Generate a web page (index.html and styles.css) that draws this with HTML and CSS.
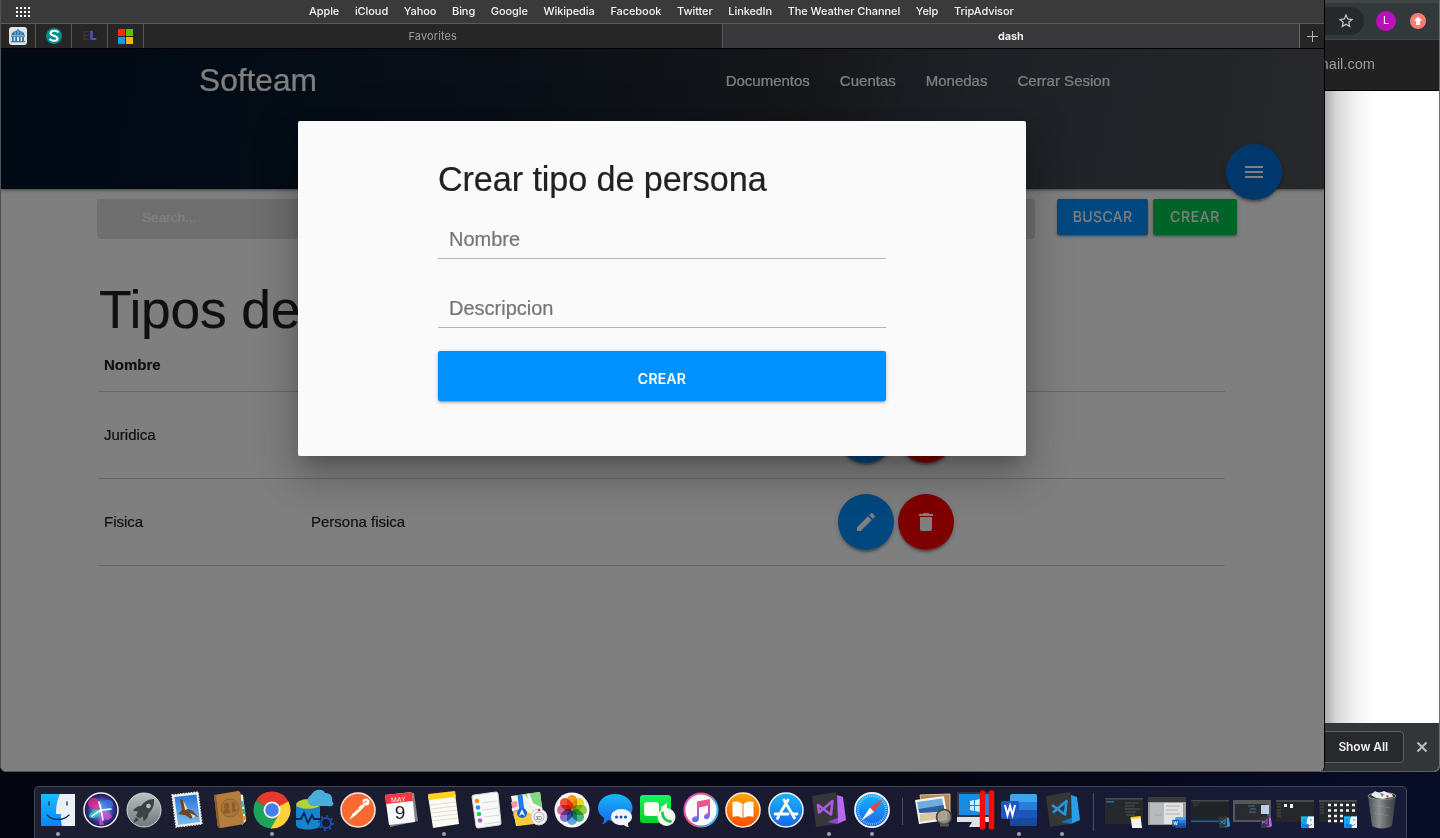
FILE: index.html
```html
<!DOCTYPE html>
<html lang="es">
<head>
<meta charset="utf-8">
<title>dash</title>
<link rel="stylesheet" href="styles.css">
</head>
<body>
<svg width="0" height="0" class="defs">
  <defs>
    <linearGradient id="g-finder" x1="0" y1="0" x2="0" y2="1"><stop offset="0" stop-color="#19bdfd"/><stop offset="1" stop-color="#0a83fa"/></linearGradient>
    <linearGradient id="g-grey" x1="0" y1="0" x2="0" y2="1"><stop offset="0" stop-color="#b9c1c4"/><stop offset="1" stop-color="#6f7779"/></linearGradient>
    <linearGradient id="g-sky" x1="0" y1="0" x2="0" y2="1"><stop offset="0" stop-color="#2474d8"/><stop offset="1" stop-color="#7fc0f0"/></linearGradient>
    <linearGradient id="g-orange" x1="0" y1="0" x2="0" y2="1"><stop offset="0" stop-color="#ffa800"/><stop offset="1" stop-color="#fb4b05"/></linearGradient>
    <linearGradient id="g-blue" x1="0" y1="0" x2="0" y2="1"><stop offset="0" stop-color="#17b7fb"/><stop offset="1" stop-color="#1a66e8"/></linearGradient>
    <linearGradient id="g-green" x1="0" y1="0" x2="0" y2="1"><stop offset="0" stop-color="#19f45b"/><stop offset="1" stop-color="#04d12b"/></linearGradient>
    <linearGradient id="g-note" x1="0" y1="0" x2="0" y2="1"><stop offset="0" stop-color="#ff5374"/><stop offset=".6" stop-color="#b75bd8"/><stop offset="1" stop-color="#3478f6"/></linearGradient>
    <linearGradient id="g-ring" x1="0" y1="0" x2="1" y2=".4"><stop offset="0" stop-color="#d14cf4"/><stop offset=".5" stop-color="#ff4d63"/><stop offset="1" stop-color="#37b6ff"/></linearGradient>
    <linearGradient id="g-trash" x1="0" y1="0" x2="1" y2="0"><stop offset="0" stop-color="#4b4e50"/><stop offset=".4" stop-color="#8b8e90"/><stop offset=".7" stop-color="#5c5f61"/><stop offset="1" stop-color="#38393b"/></linearGradient>
    <radialGradient id="g-siri"><stop offset="0" stop-color="#e8ffff"/><stop offset=".3" stop-color="#58b8dc"/><stop offset=".7" stop-color="#3a3a96"/><stop offset="1" stop-color="#1b1238"/></radialGradient>
    <symbol id="finder" viewBox="0 0 34 34"><path fill="url(#g-finder)" d="M0 1h34v32H0z"/><path fill="#eceff6" d="M19 1h15v32H21c-1-4-1.200-8-1-12h-5c0-8 1-14 4-20z"/><path fill="none" stroke="#16314f" stroke-width="1.300" stroke-linecap="round" d="M8 9v3M26 9v3M6 22c6 6 16 6 22 0"/></symbol>
    <symbol id="vs" viewBox="0 0 34 36"><path fill="#373639" d="M0 4 24 0l6 31-26 4z"/><path fill="#8f45c4" d="m25 26 9 2-9 4-10-2z"/><path fill="#b768ee" d="m25 3 6 2 3 23-8 3z"/><path fill="none" stroke="#a95be0" stroke-width="2.600" stroke-linejoin="round" d="m6 13 13 9.500L20.500 9 7 20.500z"/></symbol>
    <symbol id="code" viewBox="0 0 34 36"><path fill="#353638" d="M0 4 24 0l6 31-26 4z"/><path fill="#1273b9" d="m25 26 9 2-9 4-10-2z"/><path fill="#2b9fe6" d="m25 3 6 2 3 23-8 3z"/><path fill="none" stroke="#2496e0" stroke-width="2.600" stroke-linejoin="round" d="m6 13 13 9.500L20.500 9 7 20.500"/></symbol>
    <symbol id="word" viewBox="0 0 36 32"><rect x="9" width="27" height="32" rx="2" fill="#1d55b9"/><path fill="#3fa3ee" d="M11 0h23a2 2 0 0 1 2 2v6H9V2a2 2 0 0 1 2-2z"/><path fill="#2b7cd6" d="M9 8h27v8H9z"/><path fill="#174a9f" d="M9 24h27v6a2 2 0 0 1-2 2H11a2 2 0 0 1-2-2z"/><rect y="7" width="18" height="18" rx="2" fill="#1c57bd"/><path fill="none" stroke="#fff" stroke-width="2" d="m4 11 2.500 10L9 12l2.500 9L14 11"/></symbol>
    <symbol id="notes" viewBox="0 0 34 38"><path fill="#fbfaf3" d="m1 5 27-3 4 31-26 4z"/><path fill="#ffd21c" d="m1 3 27-3 1 6-27 3z"/><path fill="none" stroke="#d5d2c4" stroke-width=".7" d="m3 14 26-3M3.500 18l26-3M4 22l26-3M4.500 26l26-3M5 30l26-3"/></symbol>
  </defs>
</svg>

<section class="chrome">
  <div class="chrome-toolbar">
    <div class="omnibox"><svg width="18" height="18" viewBox="0 0 24 24"><path fill="#c5c8ca" d="m22 9.240-7.190-.62L12 2 9.190 8.630 2 9.240l5.460 4.730L5.820 21 12 17.270 18.180 21l-1.630-7.030zM12 15.400l-3.760 2.270 1-4.280-3.320-2.880 4.380-.38L12 6.100l1.710 4.040 4.380.38-3.320 2.880 1 4.280z"/></svg></div>
    <span class="avatar">L</span>
    <span class="update"><svg width="16" height="16" viewBox="0 0 16 16"><path fill="#fff" d="m8 3.500 4.200 4.300H10V12H6V7.800H3.800z"/></svg></span>
  </div>
  <div class="infobar">mail.com</div>
  <div class="chrome-page"></div>
  <div class="downloads"><span class="show-all">Show All</span><svg width="12" height="12" viewBox="0 0 12 12"><path stroke="#bcbfc1" stroke-width="2" d="m1.500 1.500 9 9m0-9-9 9"/></svg></div>
</section>

<section class="safari">
  <div class="bookmarks">
    <svg class="grid-icon" width="14" height="11" viewBox="0 0 14 11"><path stroke="#fff" stroke-width="2" stroke-dasharray="2 2" d="M0 1h14M0 5h14M0 9h14"/></svg>
    <nav class="bookmark-list"><span>Apple</span><span>iCloud</span><span>Yahoo</span><span>Bing</span><span>Google</span><span>Wikipedia</span><span>Facebook</span><span>Twitter</span><span>LinkedIn</span><span>The Weather Channel</span><span>Yelp</span><span>TripAdvisor</span></nav>
  </div>
  <div class="tabs">
    <span class="pin"><svg width="18" height="18" viewBox="0 0 18 18"><rect width="18" height="18" rx="3" fill="#e2e3e4"/><path fill="#2878ad" d="M2.500 8C3 5 5 4 8 3.500V2.500h2v1c3 .5 5 1.500 5.500 4.500zM2 8.500h14v1.300H2zM3 10h1.700v4H3zm3.200 0H8v4H6.200zM10 10h1.700v4H10zm3.200 0H15v4h-1.800zM2 14h14v1.200H2z"/><path stroke="#e2e3e4" stroke-width=".6" d="M6 4v4M9 3.500V8M12 4v4"/></svg></span>
    <span class="pin"><svg width="16" height="16" viewBox="0 0 16 16"><circle cx="8" cy="8" r="8" fill="#078d91"/><path fill="none" stroke="#fff" stroke-width="2" d="M12.500 4.500C10 2 4.500 2.500 4.500 5.200c0 3 7 2 7 5.300 0 3-5.500 3-8 .5"/></svg></span>
    <span class="pin pin-el"><i>E</i><b>L</b></span>
    <span class="pin"><svg width="15" height="15" viewBox="0 0 15 15"><path fill="#fe2b04" d="M0 0h7v7H0z"/><path fill="#66bc00" d="M8 0h7v7H8z"/><path fill="#059ff1" d="M0 8h7v7H0z"/><path fill="#ffb900" d="M8 8h7v7H8z"/></svg></span>
    <span class="tab">Favorites</span>
    <span class="tab active">dash</span>
    <span class="new-tab"><svg width="11" height="11" viewBox="0 0 11 11"><path stroke="#b5b5b5" d="M5.500 0v11M0 5.500h11"/></svg></span>
  </div>
  <main class="page">
    <header class="hero">
      <div class="nav">
        <a class="brand">Softeam</a>
        <ul class="links"><li>Documentos</li><li>Cuentas</li><li>Monedas</li><li>Cerrar Sesion</li></ul>
      </div>
      <span class="fab menu"><svg width="24" height="24" viewBox="0 0 24 24"><path fill="#fff" d="M3 18h18v-2H3zm0-5h18v-2H3zm0-7v2h18V6z"/></svg></span>
    </header>
    <div class="search-row">
      <div class="search">Search...</div>
      <span class="btn blue">BUSCAR</span>
      <span class="btn green">CREAR</span>
    </div>
    <h2>Tipos de</h2>
    <table class="people">
      <thead><tr><th class="c1">Nombre</th><th class="c2"></th><th></th></tr></thead>
      <tbody>
        <tr><td>Juridica</td><td></td><td><div class="actions"><span class="fab blue"></span><span class="fab red"></span></div></td></tr>
        <tr><td>Fisica</td><td>Persona fisica</td><td><div class="actions">
          <span class="fab blue"><svg width="24" height="24" viewBox="0 0 24 24"><path fill="#fff" d="M3 17.250V21h3.750L17.810 9.940l-3.750-3.750zM20.710 7.040a1 1 0 0 0 0-1.410l-2.340-2.340a1 1 0 0 0-1.410 0l-1.830 1.830 3.750 3.750z"/></svg></span>
          <span class="fab red"><svg width="24" height="24" viewBox="0 0 24 24"><path fill="#fff" d="M6 19c0 1.100.9 2 2 2h8c1.100 0 2-.9 2-2V7H6zM19 4h-3.500l-1-1h-5l-1 1H5v2h14z"/></svg></span>
        </div></td></tr>
      </tbody>
    </table>
    <div class="overlay"></div>
    <form class="modal">
      <h4>Crear tipo de persona</h4>
      <div class="field">Nombre</div>
      <div class="field">Descripcion</div>
      <div class="submit">CREAR</div>
    </form>
  </main>
</section>

<section class="dock">
  <span class="app on"><svg width="34" height="34"><use href="#finder"/></svg></span>
  <span class="app"><svg width="36" height="36" viewBox="0 0 36 36"><circle cx="18" cy="18" r="17" fill="url(#g-siri)" stroke="#f1eff4" stroke-width="1.500"/><path fill="#e9268c" opacity=".8" d="M18 18C5 18 3 12 7 7c7-4 10 3 11 11z"/><path fill="#2bd9c0" opacity=".8" d="M18 18c-7 1-13 2-12 7 6 4 10-2 12-7z"/><path fill="#3d74f2" opacity=".7" d="M18 18c1-9 6-13 11-9 4 6-3 9-11 9z"/><path fill="#d84bd7" opacity=".8" d="M18 18c7 1 13 5 10 8-5 5-8 0-10-8zM17 19l-1 14h5z"/><path stroke="#fff" stroke-width="1.500" stroke-linecap="round" fill="none" d="m9 24 9-6 10-1M16 10l2 8 2 10"/></svg></span>
  <span class="app"><svg width="36" height="36" viewBox="0 0 36 36"><circle cx="18" cy="18" r="17" fill="url(#g-grey)" stroke="#cfd5d7"/><path fill="#3d4245" d="M28 7c-6 0-10 3-13 7-4 0-6 2-8 5l5 .5-2 4 3 3 4-2 .5 5c3-2 5-5 5-8 4-4 6-8 5.500-14.500zM10 25l-3 6 6-3z"/><circle cx="22.500" cy="14" r="2.300" fill="#b7c1c4"/></svg></span>
  <span class="app"><svg width="34" height="38" viewBox="0 0 34 38"><path fill="#f2f1ee" d="m2 4 26-3 4 32-26 3z" stroke="#f2f1ee" stroke-dasharray="1.500 1.200" stroke-width="1.500"/><path fill="url(#g-sky)" d="m4.500 6 22-2.500L30 31 8 34z"/><path fill="#6b4528" d="m10 8 3 1 5 9 5 2 5 6-5-1-2 3-6-4-7-1 4-4z"/><path fill="#ead8be" d="m13 9 5 9-3 1zM20 22l6 3-3 2z"/></svg></span>
  <span class="app"><svg width="34" height="38" viewBox="0 0 34 38"><path fill="#f4f4ee" d="m26 3 4 1 3 26-4 4z"/><path stroke-width="3" d="m29 10 1 6" stroke="#3ebad6"/><path stroke-width="3" d="m30.500 18 .6 5" stroke="#47b85b"/><path stroke-width="3" d="m31.500 25 .4 4" stroke="#f28d28"/><path fill="#b47d3c" d="m1 4 24-4q2 0 2.500 2L31 33 8 37q-3 0-3.500-3z"/><path fill="#8e5e28" d="m1 4 2-.4L7 37q-2 0-2.500-3z"/><circle cx="17" cy="17" r="9" fill="#a9733a" stroke="#8f6330"/><path fill="#8a5d2b" d="M13 12c4-1 4 5 2 6 2 1 2 2 2 4l-7 1c0-3 1-4 2-5-2-3-1-5 1-6zm6-1c4 0 4 5 2 6 1 1 3 1 3 3l-5 1z"/></svg></span>
  <span class="app on"><svg width="38" height="38" viewBox="0 0 36 36"><path fill="#e33b2e" d="M18 18 3 9a17.500 17.500 0 0 1 31 2z"/><path fill="#fdd13a" d="M18 18 33.500 10A17.500 17.500 0 0 1 17 35.500z"/><path fill="#1ea35a" d="m18 18-1 17.500A17.500 17.500 0 0 1 3 9z"/><path fill="#1ea35a" d="m17 35.500 8-14-8-3-6 3z"/><path fill="#fdd13a" d="m17 35.500 8-13.500 1-8h8l-3 13z"/><path fill="#e33b2e" d="M18 10h15.500l-5-4H8z"/><circle cx="18" cy="18" r="8" fill="#f5f7fa"/><circle cx="18" cy="18" r="6.400" fill="#4380ec"/></svg></span>
  <span class="app"><svg width="38" height="42" viewBox="0 0 38 42"><ellipse cx="12" cy="16" rx="12" ry="6" fill="#b2d235"/><path fill="#1583cd" d="M0 16c2 5 22 5 24 0v20c0 6-24 6-24 0z"/><path fill="none" stroke="#0b2454" stroke-width="1.800" d="M0 30h5l3-6 4 10 4-8 2 4h6"/><path fill="#47aeda" d="M16 17a6 6 0 0 1-1-11C18 0 27-1 29 4c5 0 8 3 7 8 4 5-2 6-4 5z"/><circle cx="30" cy="34" r="5" fill="none" stroke="#164fb4" stroke-width="2"/><circle cx="30" cy="34" r="7" fill="none" stroke="#164fb4" stroke-width="2" stroke-dasharray="2 3.500"/></svg></span>
  <span class="app"><svg width="36" height="36" viewBox="0 0 36 36"><circle cx="18" cy="18" r="17" fill="#fa692e" stroke="#f7e9e2" stroke-width="1.500"/><circle cx="26" cy="10" r="3.500" fill="#fff"/><path fill="#fff" d="m25 14-9 9-7 5 4-7 8-8 3-1z"/><path stroke="#fa692e" d="m13 21 6-5m4-5 4-2"/></svg></span>
  <span class="app"><svg width="34" height="36" viewBox="0 0 34 36"><path fill="#7b898a" d="m3 5 27-4 4 28-28 6z"/><path fill="#fafafa" d="m1 3 27-3 3 30-26 3z"/><path fill="#f0383e" d="m1 3 27-3 1 9-27 3z"/><text x="7" y="10" transform="rotate(-5 14 8)" class="cal-month">MAY</text><text x="16" y="27" class="cal-day">9</text></svg></span>
  <span class="app on"><svg width="34" height="38"><use href="#notes"/></svg></span>
  <span class="app"><svg width="32" height="38" viewBox="0 0 32 38"><path fill="#f8f8f8" stroke="#d9d9d9" d="m3 4 22-3q2 0 2 2l3 29q0 2-2 2L7 37q-2 0-2-2L1 6q0-2 2-2z"/><circle cx="6" cy="10" r="2.300" fill="#fb8d14"/><circle cx="7" cy="16.500" r="2.300" fill="#1b93f4"/><circle cx="8" cy="23" r="2.300" fill="#27d34a"/><circle cx="9" cy="29.500" r="2.300" fill="#b45cdb"/><path stroke="#ccc" stroke-width=".7" d="m11 12 15-2m-14 9 15-2m-14 9 15-2m-14 9 15-2"/></svg></span>
  <span class="app"><svg width="38" height="36" viewBox="0 0 38 36"><path fill="#f4f1e6" d="m1 4 29-4 4 30-28 4z"/><path fill="#85d883" d="m14 2 16-2 2 16-8-3z"/><path fill="#f7cc37" d="m3 22 10-7 19 9 1 7-26 3z"/><path fill="#f496a3" d="m1 10 6-1 1 10-5 2z"/><path fill="none" stroke="#fff" stroke-width="2.500" d="m2 18 8-3 22 10M18 2l4 10 10 5"/><path stroke="#1c7df0" stroke-width="5" d="m10 3 2 17"/><circle cx="12" cy="21" r="5" fill="#1865d8"/><path fill="#fff" d="m12 17 3 7-3-2-3 2z"/><circle cx="29" cy="25" r="8" fill="#f3f3f3" stroke="#c9cdd1"/><circle cx="29" cy="25" r="5" fill="none" stroke="#a7aeb5"/><text x="25.500" y="27.500" class="map-text">3D</text><path fill="#e33" d="m29 16 1.500 3h-3z"/></svg></span>
  <span class="app"><svg width="36" height="36" viewBox="0 0 36 36"><circle cx="18" cy="18" r="17.500" fill="#f6f6f4"/><g class="petals"><rect x="13" y="3" width="10" height="14.500" rx="5" fill="#f79a1f"/><rect x="13" y="3" width="10" height="14.500" rx="5" fill="#e5d91e" transform="rotate(45 18 18)"/><rect x="13" y="3" width="10" height="14.500" rx="5" fill="#8ccb45" transform="rotate(90 18 18)"/><rect x="13" y="3" width="10" height="14.500" rx="5" fill="#42b782" transform="rotate(135 18 18)"/><rect x="13" y="3" width="10" height="14.500" rx="5" fill="#63a5e0" transform="rotate(180 18 18)"/><rect x="13" y="3" width="10" height="14.500" rx="5" fill="#8770c5" transform="rotate(225 18 18)"/><rect x="13" y="3" width="10" height="14.500" rx="5" fill="#d06ba2" transform="rotate(270 18 18)"/><rect x="13" y="3" width="10" height="14.500" rx="5" fill="#ef5139" transform="rotate(315 18 18)"/></g></svg></span>
  <span class="app"><svg width="36" height="36" viewBox="0 0 36 36"><path fill="url(#g-blue)" d="M18 2c9.500 0 17.500 6 17.500 14S28 29 18 29c-3 0-5 0-7-1-1 2-3 4-6 4 2-2 2-4 2-6-4-3-6-6-6-10C1 8 9 2 18 2z"/><path fill="#f0f5fb" d="M24 17c6 0 11 3 11 8 0 3-2 5-4 6 0 2 0 3 1 4-2 0-4-1-5-2-8 1-13-3-13-8s5-8 10-8z"/><path stroke="#17529e" stroke-width="3" stroke-linecap="round" stroke-dasharray="0 4.500" d="M19.500 25H30"/></svg></span>
  <span class="app"><svg width="36" height="36" viewBox="0 0 36 36"><rect y="3" width="31" height="28" rx="3" fill="url(#g-green)"/><rect x="4" y="10" width="15" height="14" rx="3" fill="#f5fff6"/><path fill="#f5fff6" d="m21 15 6-4v13l-6-4z"/><circle cx="26.500" cy="25" r="9" fill="#f3f5f3"/><path fill="none" stroke="#1cc84a" stroke-width="2.800" stroke-linecap="round" d="M22.500 21c0 5 4 8.500 8 8.500"/></svg></span>
  <span class="app"><svg width="36" height="36" viewBox="0 0 36 36"><circle cx="18" cy="18" r="16.600" fill="#fafafa" stroke="url(#g-ring)" stroke-width="2"/><path fill="url(#g-note)" d="M14 9.500 27 7v16.500c0 4-6 5-6 1.500 0-3 3-3 4-3.500v-8l-9 2v11c0 4.500-7 5-7 1 0-3 4-3 5-3.500z"/></svg></span>
  <span class="app"><svg width="36" height="36" viewBox="0 0 36 36"><circle cx="18" cy="18" r="17" fill="url(#g-orange)" stroke="#f6ebdf" stroke-width="1.500"/><path fill="#fff" d="M17.500 12c-3-3-7-3-10-2v15c3-1 7-1 10 1zM18.500 12c3-3 7-3 10-2v15c-3-1-7-1-10 1z"/></svg></span>
  <span class="app"><svg width="36" height="36" viewBox="0 0 36 36"><circle cx="18" cy="18" r="17" fill="url(#g-blue)" stroke="#ecf2f8" stroke-width="1.500"/><path stroke="#fff" stroke-width="2.800" stroke-linecap="round" d="m16 8 10.500 18M20 8 12 21.500M10.500 24.500l-1 2M7 22h13m5 0h4"/></svg></span>
  <span class="app on"><svg width="34" height="36"><use href="#vs"/></svg></span>
  <span class="app on"><svg width="36" height="36" viewBox="0 0 36 36"><circle cx="18" cy="18" r="17" fill="url(#g-blue)" stroke="#eef1f4" stroke-width="1.800"/><circle cx="18" cy="18" r="14" fill="none" stroke="#b6e4fb" stroke-width="2" stroke-dasharray=".6 1.300"/><path fill="#f2403c" d="M29 7 16 15.500l4 4.500z"/><path fill="#f4f4f4" d="m7 29 9-13.500 4 4.500z"/></svg></span>
  <i class="divider"></i>
  <span class="app"><svg width="38" height="36" viewBox="0 0 38 36"><path fill="#b28a58" stroke="#d8c29b" d="m5 3 30-1v20H8z"/><path fill="#f4f4f0" d="m0 8 29-4 4 24-29 4z"/><path fill="#6fabdf" d="m2 10 25-3.500 2 10-25 4z"/><path fill="#2d5f9f" d="m3.500 17 25-4 1 7-25 1z"/><path fill="#d9c8a6" d="m4.500 22 25-3 1 7L5 30z"/><circle cx="29" cy="25" r="7.500" fill="#9d9a86" fill-opacity=".85" stroke="#3e3e3c" stroke-width="1.500"/><path stroke="#555" stroke-width="3" d="M25 33h9"/></svg></span>
  <span class="app"><svg width="40" height="40" viewBox="0 0 40 40"><path fill="#30363b" d="M1 2h35v26H1z"/><path fill="#188be3" d="M3 4h31v21H3z"/><path fill="#dfe3e7" d="M1 27h35v5H1zM16 32h9l2 5H13z"/><path fill="#caf0ff" d="m14 11 4-1v5h-4zm5-1 5-1v6h-5zm-5 6h4v5l-4-1zm5 0h5v6l-5-1z"/><path stroke="#fc0909" stroke-width="5.500" stroke-linecap="round" d="M26.500 3v34m9-34v34"/></svg></span>
  <span class="app on"><svg width="36" height="32"><use href="#word"/></svg></span>
  <span class="app on code"><svg width="34" height="36"><use href="#code"/></svg></span>
  <i class="divider tall"></i>
  <span class="app"><svg width="40" height="36" viewBox="0 0 40 36"><path fill="#26282c" d="M0 6h38v26H0z"/><path fill="#4c4d50" d="M0 6h38v1.500H0z"/><path fill="#176de0" d="M1 9h8v1.500H1z"/><path stroke="#686a6e" stroke-width=".7" d="M20 11h13m-13 3h10m-10 3h15m-15 3h11M21 23h9"/><use href="#notes" x="25" y="24" width="13" height="14"/></svg></span>
  <span class="app"><svg width="40" height="36" viewBox="0 0 40 36"><path fill="#9a9b9d" d="M0 5h38v28H0z"/><path fill="#38393c" d="M0 5h38v5H0z"/><path fill="#b9babb" d="M2 11h33v21H2z"/><path fill="#e2e2e2" d="M16 11h19v21H16z"/><path stroke="#999" stroke-width=".7" d="M18 14h14m-14 4h12m-12 4h14M7 23h6"/><use href="#word" x="24" y="25" width="14" height="12"/></svg></span>
  <span class="app"><svg width="40" height="36" viewBox="0 0 40 36"><path fill="#222326" d="M0 8h38v21H0z"/><path fill="#47494c" d="M0 8h38v1.500H0z"/><path fill="#1466a0" d="M0 28.500h38V30H0z"/><path stroke="#55575b" stroke-width=".6" d="M2 11h7m-7 2h5"/><use href="#code" x="27" y="24" width="12" height="13"/></svg></span>
  <span class="app"><svg width="40" height="36" viewBox="0 0 40 36"><path fill="#55575b" d="M0 8h38v22H0z"/><path fill="#292b2f" d="M2 12h32v16H2z"/><path fill="#b9cfe8" d="M28 13h8v9h-8z"/><path stroke="#5386a6" stroke-width=".8" d="M15 14h7m-5 3h6m-7 3h7"/><use href="#vs" x="27" y="24" width="12" height="13"/></svg></span>
  <span class="app"><svg width="40" height="36" viewBox="0 0 40 36"><path fill="#25272b" d="M0 8h38v22H0z"/><path fill="#47494c" d="M0 8h38v2H0z"/><path stroke="#66686b" stroke-width=".7" d="M1 12h4m-4 3h4m-4 3h4m-4 3h4m-4 3h4"/><path fill="#eef1f5" d="M8 12h3v3H8zm6 0h3v4h-3z"/><use href="#finder" x="25" y="24" width="13" height="13"/></svg></span>
  <span class="app"><svg width="40" height="36" viewBox="0 0 40 36"><path fill="#25272b" d="M0 8h38v22H0z"/><path fill="#47494c" d="M0 8h38v2H0z"/><path stroke="#66686b" stroke-width=".7" d="M1 12h4m-4 3h4m-4 3h4m-4 3h4"/><path stroke="#f0f1f2" stroke-width="2.500" stroke-dasharray="3 3" d="M9 13h28M9 18.500h28M9 24h18M9 29h18"/><use href="#finder" x="25" y="24" width="13" height="13"/></svg></span>
  <span class="app"><svg width="30" height="38" viewBox="0 0 30 38"><path fill="url(#g-trash)" d="m1 5 4 30q10 5 20 0l4-30z"/><ellipse cx="15" cy="5" rx="14" ry="3.500" fill="#303133" stroke="#8e9193"/><path fill="#ecece9" d="m4 4 4-4 4 2 5-2 4 2 4 1 1 3-6 1-4 1-7-1z"/><path fill="#538fc6" d="m13 2 4 1-2 3z"/><path fill="#a84935" d="m19 4 3 1-2 2z"/><path stroke="#a9abac" stroke-width=".6" opacity=".5" d="m6 14 18 3M7 22l15 3"/></svg></span>
</section>
</body>
</html>
```
FILE: styles.css
```css
* { box-sizing: border-box; }
html { font-size: 15px; }
body {
  margin: 0;
  width: 1440px;
  height: 838px;
  overflow: hidden;
  position: relative;
  background: linear-gradient(90deg, #04060f, #05050f 60%, #070d26);
  font-family: "Liberation Sans", Arial, sans-serif;
}
.defs { position: absolute; }

/* Browser window in the background */
.chrome {
  position: absolute;
  left: 1300px;
  top: 0;
  width: 140px;
  height: 772px;
  display: flex;
  flex-direction: column;
  border-right: 1px solid #6b6e70;
  border-bottom: 1px solid #5a5e60;
  border-radius: 0 0 6px 6px;
  overflow: hidden;
  background: #fff;
}
.chrome-toolbar {
  height: 40px;
  display: flex;
  align-items: center;
  padding-top: 2px;
  background: linear-gradient(#404548 0, #404548 3px, #33383b 3px);
  border-bottom: 1px solid #414548;
}
.omnibox {
  width: 64px;
  height: 28px;
  border-radius: 0 14px 14px 0;
  background: #25292c;
  display: flex;
  align-items: center;
  justify-content: flex-end;
  padding-right: 9px;
}
.avatar {
  width: 20px;
  height: 20px;
  margin-left: 12px;
  border-radius: 50%;
  background: #ba10bb;
  color: #fff;
  font: 11px/20px Roboto, sans-serif;
  text-align: center;
}
.update {
  width: 16px;
  height: 16px;
  margin-left: 14px;
  border-radius: 50%;
  background: #ff7b74;
  display: flex;
}
.infobar {
  height: 51px;
  padding-right: 64px;
  border-bottom: 1px solid #000;
  background: #212121;
  color: #9b9b9b;
  font-size: 14.600px;
  line-height: 49px;
  display: flex;
  justify-content: flex-end;
}
.chrome-page { height: 632px; background: linear-gradient(90deg, #a8a8a8 24px, #d6d6d6 36px, #f3f3f3 55px, #fff 76px); }
.downloads {
  flex: 1;
  display: flex;
  align-items: center;
  gap: 12px;
  background: #323639;
}
.show-all {
  width: 104px;
  height: 32px;
  border: 1px solid #5b5f62;
  border-radius: 4px;
  background: #28292c;
  color: #f1f1f1;
  font: 600 12px/30px Inter, sans-serif;
  letter-spacing: -.1px;
  text-align: right;
  padding-right: 15px;
}

/* Front window */
.safari {
  position: absolute;
  left: 0;
  top: 0;
  width: 1325px;
  height: 772px;
  border: solid #4d5357;
  border-width: 0 1px 1px;
  border-right-color: #000;
  border-radius: 0 0 6px 6px;
  overflow: hidden;
  background: #fff;
  font-family: Inter, sans-serif;
}
.bookmarks {
  height: 24px;
  display: flex;
  align-items: center;
  padding: 0 0 1px 14px;
  background: #3a3a3b;
  border-bottom: 1px solid #5a5a5b;
  color: #f3f3f3;
  font-size: 11px;
}
.grid-icon { margin-top: 2px; margin-left: 1px; }
.bookmark-list {
  display: flex;
  gap: 15.700px;
  margin-left: 279px;
  letter-spacing: -.08px;
  white-space: nowrap;
  font-weight: 500;
}
.tabs {
  height: 25px;
  display: flex;
  background: #262626;
  border-bottom: 1px solid #000;
  color: #9d9d9d;
  font-size: 11px;
  line-height: 24px;
  text-align: center;
}
.pin {
  width: 36px;
  border-right: 1px solid #565656;
  display: flex;
  align-items: center;
  justify-content: center;
}
.pin:first-child { width: 35px; }
.pin-el { font-size: 12px; font-weight: 700; }
.pin-el i { color: #34343a; font-style: normal; }
.pin-el b { background: linear-gradient(#246fe0, #7936bd); background-clip: text; color: transparent; }
.tab { width: 577.500px; letter-spacing: .1px; }
.tab.active { background: #38383a; border-left: 1px solid #5a5a5a; color: #fff; font-weight: 600; letter-spacing: -.1px; }
.new-tab { flex: 1; border-left: 1px solid #686868; display: flex; align-items: center; justify-content: center; }

.page {
  position: relative;
  height: 722px;
  overflow: hidden;
  font-family: "Liberation Sans", Arial, sans-serif;
  color: #212121;
  font-size: 15px;
  -webkit-text-stroke: .2px currentColor;
}
.hero {
  position: relative;
  height: 140px;
  background: linear-gradient(100deg, #00142b 8%, #141f2f 38%, #2a2e33 60%, #3b424d 73%, #4d5155);
  box-shadow: 0 2px 2px 0 rgba(0,0,0,.14), 0 3px 1px -2px rgba(0,0,0,.12), 0 1px 5px 0 rgba(0,0,0,.2);
}
.nav {
  height: 62px;
  display: flex;
  align-items: center;
  justify-content: space-between;
  padding: 0 214px 0 198px;
  color: #fff;
}
.brand { font-size: 31.700px; }
.links { display: flex; gap: 30px; list-style: none; margin: 0; padding: 0; }
.fab {
  width: 56px;
  height: 56px;
  border-radius: 50%;
  display: flex;
  align-items: center;
  justify-content: center;
  box-shadow: 0 3px 3px 0 rgba(0,0,0,.14), 0 1px 7px 0 rgba(0,0,0,.12), 0 3px 1px -1px rgba(0,0,0,.2);
}
.menu { position: absolute; right: 42px; bottom: -11px; background: #006fd8; }
.blue { background: #0091ff; }
.red { background: #f00; }
.green { background: #00c853; }
.search-row { display: flex; padding: 10px 0 0 96px; }
.search {
  width: 938px;
  height: 40px;
  margin-right: 22px;
  padding-left: 45px;
  border-radius: 4px;
  background: #dedede;
  color: #fff;
  font-size: 13.600px;
  line-height: 38px;
}
.btn {
  width: 91px;
  height: 36px;
  margin-right: 5px;
  border-radius: 2px;
  color: #fff;
  font: 14px/36px Inter, sans-serif;
  letter-spacing: .4px;
  text-align: center;
  box-shadow: 0 2px 2px 0 rgba(0,0,0,.14), 0 3px 1px -2px rgba(0,0,0,.12), 0 1px 5px 0 rgba(0,0,0,.2);
}
.btn.green { width: 84px; letter-spacing: .7px; }
h2 { margin: 41px 0 0 98px; font-size: 53.400px; font-weight: 400; line-height: 60px; letter-spacing: -.2px; }
.people {
  width: 1126px;
  margin: -1px 0 0 98px;
  border-collapse: collapse;
  table-layout: fixed;
}
.people th, .people td { padding: 0 5px; text-align: left; border-bottom: 1px solid #d0d0d0; }
.people th { height: 52px; font-weight: 700; }
.people td { height: 87px; }
.c1 { width: 207px; }
.c2 { width: 527px; }
.actions { display: flex; gap: 4px; }
.overlay { position: absolute; inset: 0; background: rgba(0,0,0,.5); }
.modal {
  position: absolute;
  left: 297px;
  top: 72px;
  width: 728px;
  height: 335px;
  padding: 39px 140px 0;
  border-radius: 2px;
  background: #fafafa;
  box-shadow: 0 24px 38px 3px rgba(0,0,0,.14), 0 9px 46px 8px rgba(0,0,0,.12), 0 11px 15px -7px rgba(0,0,0,.2);
}
h4 { margin: 0; font-size: 34.200px; font-weight: 400; line-height: 38px; letter-spacing: -.1px; white-space: nowrap; }
.field {
  height: 46px;
  margin: 15px 0 23px;
  padding-left: 11px;
  border-bottom: 1px solid #b4b4b4;
  color: #757575;
  font-size: 20px;
  line-height: 53px;
}
.field + .field { margin-top: 0; }
.submit {
  height: 50px;
  border-radius: 2px;
  background: #0091ff;
  color: #fff;
  font: 500 14px/56px Inter, sans-serif;
  letter-spacing: .3px;
  text-align: center;
  box-shadow: 0 2px 2px 0 rgba(0,0,0,.14), 0 3px 1px -2px rgba(0,0,0,.12), 0 1px 5px 0 rgba(0,0,0,.2);
}

/* Dock */
.dock {
  position: absolute;
  left: 34px;
  top: 786px;
  width: 1373px;
  height: 56px;
  display: flex;
  padding-left: 2px;
  border: 1px solid #42435a;
  border-radius: 5px;
  background: linear-gradient(90deg, #1c1e31, #191a30 60%, #181b38);
}
.app {
  flex: 0 0 42.820px;
  height: 50px;
  padding-bottom: 4px;
  position: relative;
  display: flex;
  align-items: center;
  justify-content: center;
}
.app svg { flex: none; }
.app.on::after {
  content: "";
  position: absolute;
  left: 50%;
  bottom: 1px;
  width: 4px;
  height: 4px;
  margin-left: -2px;
  border-radius: 50%;
  background: #a1a2b0;
}
.app.code { padding-left: 1px; }
.divider { flex: 0 0 1px; height: 27px; margin: 11px 9px 0; background: #4e5062; }
.divider.tall { height: 38px; margin-top: 6px; margin-right: 10px; }
.petals { isolation: isolate; }
.petals rect { mix-blend-mode: multiply; }
.cal-month { fill: #fff; font: 7px "Liberation Sans", sans-serif; }
.cal-day { fill: #222; font: 19px "Liberation Sans", sans-serif; text-anchor: middle; }
.map-text { fill: #555; font: 5px "Liberation Sans", sans-serif; }
```
